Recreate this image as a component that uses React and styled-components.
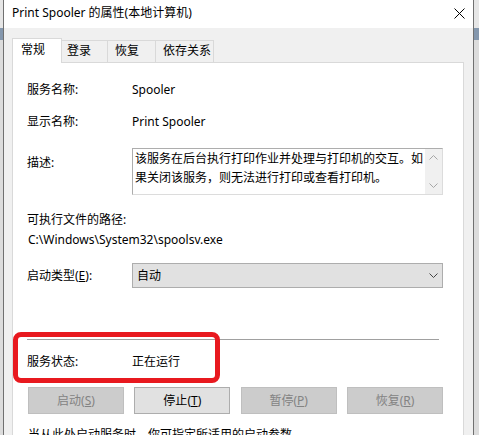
import styled, { createGlobalStyle } from 'styled-components';

const GlobalStyle = createGlobalStyle`
  html, body {
    margin: 0;
    padding: 0;
    width: 479px;
    height: 435px;
    overflow: hidden;
  }
  body {
    font-family: "Noto Sans", "Noto Sans CJK SC", sans-serif;
    font-size: 12px;
    color: #000;
  }
`;

const Screen = styled.div`
  position: relative;
  display: flex;
  width: 479px;
  height: 435px;
  overflow: hidden;
`;

const Backdrop = styled.div`
  flex: none;
  width: ${props => props.$w}px;
  background: linear-gradient(
    to bottom,
    #e6e6e6 0,
    #e6e6e6 28px,
    #8497ad 28px,
    #8497ad 40px,
    #dcdcdc 40px
  );
`;

const Dialog = styled.div`
  flex: none;
  width: 469px;
  border-left: 1px solid #707070;
  border-right: 1px solid #707070;
  display: flex;
  flex-direction: column;
  background: #f0f0f0;
  overflow: hidden;
`;

const TitleBar = styled.div`
  flex: none;
  height: 28px;
  box-sizing: border-box;
  padding: 0 8px 2px 8px;
  background: #fff;
  display: flex;
  align-items: center;
  justify-content: space-between;
  line-height: 16px;
`;

const CloseButton = styled.span`
  display: flex;
  width: 11px;
  height: 11px;
  margin-top: 1px;
`;

const Body = styled.div`
  flex: 1;
  min-height: 0;
  display: flex;
  flex-direction: column;
  padding: 10px 9px 0 8px;
`;

const TabStrip = styled.div`
  flex: none;
  display: flex;
  align-items: flex-end;
  height: 25px;
  margin-bottom: -1px;
  position: relative;
  z-index: 1;
`;

const Tab = styled.div`
  box-sizing: border-box;
  width: ${props => props.$w}px;
  height: ${props => (props.$active ? 25 : 23)}px;
  padding: 0 0 ${props => (props.$active ? 3 : 1)}px ${props => props.$pad}px;
  display: flex;
  align-items: center;
  background: ${props => (props.$active ? '#fff' : '#f0f0f0')};
  border: 1px solid #d9d9d9;
  border-bottom: ${props => (props.$active ? 'none' : '1px solid #d9d9d9')};
  border-left: ${props => (props.$first ? '1px solid #d9d9d9' : 'none')};
  line-height: 16px;
`;

const Panel = styled.div`
  flex: 1;
  min-height: 0;
  overflow: hidden;
  display: flex;
  flex-direction: column;
  background: #fff;
  border: 1px solid #d9d9d9;
  border-bottom: none;
  padding: 0 20px 0 14px;
  line-height: 16px;
  & > * {
    flex: none;
  }
`;

const InfoRow = styled.div`
  display: grid;
  grid-template-columns: 105px 1fr;
  align-items: ${props => props.$align || 'center'};
  margin-top: ${props => props.$mt}px;
`;

const Label = styled.div`
  padding-top: ${props => props.$pt || 0}px;
  white-space: nowrap;
`;

const Value = styled.div`
  white-space: nowrap;
`;

const Line = styled.div`
  margin-top: ${props => props.$mt}px;
  padding-left: ${props => props.$pl || 0}px;
  white-space: nowrap;
`;

const DescBox = styled.div`
  box-sizing: border-box;
  height: 47px;
  display: flex;
  border: 1px solid #adadad;
  border-right-color: #dcdcdc;
  border-bottom-color: #dcdcdc;
`;

const DescText = styled.div`
  flex: 1;
  padding-left: 2px;
  line-height: 19px;
  white-space: nowrap;
  overflow: hidden;
`;

const ScrollBar = styled.div`
  width: 17px;
  flex: none;
  background: #f0f0f0;
  display: flex;
  flex-direction: column;
  justify-content: space-between;
`;

const ScrollArrow = styled.div`
  height: 17px;
  display: flex;
  align-items: center;
  justify-content: center;
`;

const Combo = styled.div`
  box-sizing: border-box;
  height: 25px;
  display: flex;
  align-items: center;
  justify-content: space-between;
  padding: 0 4px 0 4px;
  background: #e1e1e1;
  border: 1px solid #adadad;
`;

const Separator = styled.div`
  height: 1px;
  margin: ${props => props.$mt}px 4px 0 0;
  background: #a0a0a0;
`;

const ButtonRow = styled.div`
  display: flex;
  justify-content: space-between;
  margin-top: 17px;
  padding-left: 1px;
`;

const Button = styled.div`
  box-sizing: border-box;
  width: 96px;
  height: 27px;
  display: flex;
  align-items: center;
  justify-content: center;
  background: ${props => (props.$disabled ? '#cccccc' : '#e1e1e1')};
  border: 1px solid ${props => (props.$disabled ? '#bfbfbf' : '#adadad')};
  color: ${props => (props.$disabled ? '#838383' : '#000')};
`;

const Mnemonic = styled.span`
  text-decoration: underline;
`;

const Highlight = styled.div`
  position: absolute;
  left: 13px;
  top: 332px;
  width: 207px;
  height: 51px;
  box-sizing: border-box;
  border: 5px solid #e8191f;
  border-radius: 8px;
  pointer-events: none;
`;

const Chevron = ({ up, color }) => (
  <svg width="9" height="5" viewBox="0 0 9 5">
    <path
      d={up ? 'M0.5 4.5 L4.5 0.5 L8.5 4.5' : 'M0.5 0.5 L4.5 4.5 L8.5 0.5'}
      fill="none"
      stroke={color}
      strokeWidth="1"
    />
  </svg>
);

const tabs = [
  { label: '常规', w: 50, pad: 8 },
  { label: '登录', w: 46, pad: 5 },
  { label: '恢复', w: 48, pad: 7 },
  { label: '依存关系', w: 58, pad: 7 },
];

const buttons = [
  { label: '启动', key: 'S', disabled: true },
  { label: '停止', key: 'T', disabled: false },
  { label: '暂停', key: 'P', disabled: true },
  { label: '恢复', key: 'R', disabled: true },
];

export default function App() {
  return (
    <Screen>
      <GlobalStyle />
      <Backdrop $w={3} />
      <Dialog>
        <TitleBar>
          <span>Print Spooler 的属性(本地计算机)</span>
          <CloseButton>
            <svg width="11" height="11" viewBox="0 0 11 11">
              <path d="M0.5 0.5 L10.5 10.5 M10.5 0.5 L0.5 10.5" stroke="#000" strokeWidth="1" />
            </svg>
          </CloseButton>
        </TitleBar>
        <Body>
          <TabStrip>
            {tabs.map((t, i) => (
              <Tab key={t.label} $w={t.w} $pad={t.pad} $active={i === 0} $first={i === 0}>
                {t.label}
              </Tab>
            ))}
          </TabStrip>
          <Panel>
            <InfoRow $mt={19}>
              <Label>服务名称:</Label>
              <Value>Spooler</Value>
            </InfoRow>
            <InfoRow $mt={16}>
              <Label>显示名称:</Label>
              <Value>Print Spooler</Value>
            </InfoRow>
            <InfoRow $mt={18} $align="start">
              <Label $pt={7}>描述:</Label>
              <DescBox>
                <DescText>
                  该服务在后台执行打印作业并处理与打印机的交互。如
                  <br />
                  果关闭该服务，则无法进行打印或查看打印机。
                </DescText>
                <ScrollBar>
                  <ScrollArrow>
                    <Chevron up color="#a6a6a6" />
                  </ScrollArrow>
                  <ScrollArrow>
                    <Chevron color="#a6a6a6" />
                  </ScrollArrow>
                </ScrollBar>
              </DescBox>
            </InfoRow>
            <Line $mt={17}>可执行文件的路径:</Line>
            <Line $mt={4} $pl={1}>C:\Windows\System32\spoolsv.exe</Line>
            <InfoRow $mt={15}>
              <Label>
                启动类型(<Mnemonic>E</Mnemonic>):
              </Label>
              <Combo>
                <span>自动</span>
                <Chevron color="#444" />
              </Combo>
            </InfoRow>
            <Separator $mt={51} />
            <InfoRow $mt={14}>
              <Label>服务状态:</Label>
              <Value>正在运行</Value>
            </InfoRow>
            <ButtonRow>
              {buttons.map(b => (
                <Button key={b.key} $disabled={b.disabled}>
                  {b.label}(<Mnemonic>{b.key}</Mnemonic>)
                </Button>
              ))}
            </ButtonRow>
            <Line $mt={13} $pl={1}>当从此处启动服务时，你可指定所适用的启动参数。</Line>
          </Panel>
        </Body>
      </Dialog>
      <Backdrop $w={5} />
      <Highlight />
    </Screen>
  );
}
